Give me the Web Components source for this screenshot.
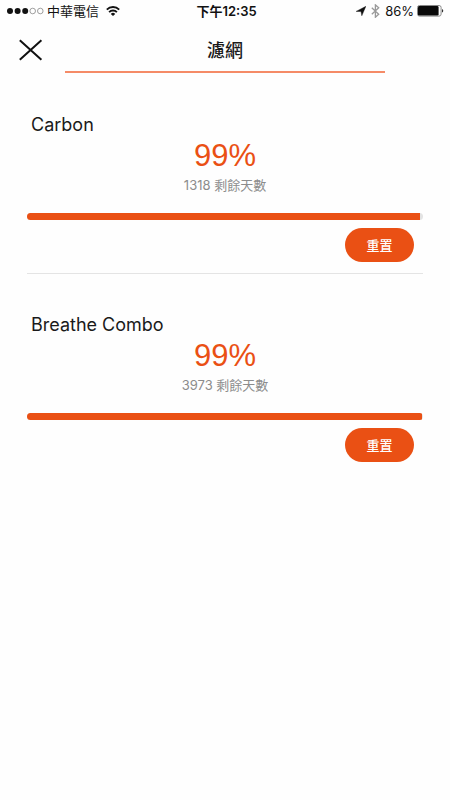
<!DOCTYPE html>
<html lang="zh-Hant">
<head>
<meta charset="utf-8">
<meta name="viewport" content="width=device-width, initial-scale=1">
<title>濾網</title>
<style>
  body {
    margin: 0;
    background: #fefefe;
    color: #1a1a1a;
    font-family: Inter, "Noto Sans CJK TC", sans-serif;
    --accent: #ea5014;
  }
</style>
</head>
<body>
<filter-page></filter-page>
<script>
const define = (name, html, setup) => {
  const template = document.createElement('template');
  template.innerHTML = html;
  customElements.define(name, class extends HTMLElement {
    constructor() {
      super();
      this.attachShadow({ mode: 'open' }).append(template.content.cloneNode(true));
    }
    connectedCallback() {
      if (setup) setup(this, this.shadowRoot);
    }
  });
};

define('status-bar', `
  <style>
    :host { display: grid; grid-template-columns: 1fr auto 1fr; align-items: center;
            height: 22px; padding: 0 6px 0 7px; font-size: 13px; line-height: 20px; color: #111; }
    div { display: flex; align-items: center; }
    .left { gap: 3px; }
    .right { justify-content: flex-end; }
    .wifi { margin-left: 4px; }
    .arrow { margin-right: 5px; }
    .bt { margin-right: 5px; }
    .battery { margin-left: 3px; }
    time { padding-left: 2px; font-weight: 600; }
    svg { display: block; flex: none; }
  </style>
  <div class="left">
    <svg width="37" height="8" viewBox="0 0 37 8" aria-hidden="true">
      <g fill="#111"><circle cx="3" cy="4" r="3"/><circle cx="10.6" cy="4" r="3"/><circle cx="18.2" cy="4" r="3"/></g>
      <g fill="none" stroke="#777" stroke-width=".7"><circle cx="25.7" cy="4" r="2.8"/><circle cx="33.3" cy="4" r="2.8"/></g>
    </svg>
    <span>中華電信</span>
    <svg class="wifi" width="14" height="10" viewBox="0 0 14 10" aria-hidden="true">
      <g fill="none" stroke="#111" stroke-width="1.9"><path d="M.8 3.6a8.8 8.8 0 0 1 12.4 0"/><path d="M3.1 6.1a5.5 5.5 0 0 1 7.8 0"/></g>
      <path d="M7 10 4.8 7.9a3.1 3.1 0 0 1 4.4 0z" fill="#111"/>
    </svg>
  </div>
  <time datetime="12:35">下午12:35</time>
  <div class="right">
    <svg class="arrow" width="10" height="10" viewBox="0 0 10 10" aria-hidden="true"><path d="M9.9.3 5.8 9.8 5 5.6.1 5.4z" fill="#111" stroke="#111" stroke-width=".4"/></svg>
    <svg class="bt" width="9" height="14" viewBox="0 0 9 14" aria-hidden="true"><path d="m.8 3.7 6.9 6.5-3.3 3V.9l3.3 2.9-6.9 6.5" fill="none" stroke="#999" stroke-width="1.3"/></svg>
    <span>86%</span>
    <svg class="battery" width="27" height="12" viewBox="0 0 27 12" aria-hidden="true">
      <rect x=".5" y=".5" width="23.6" height="10.6" rx="2" fill="none" stroke="#888"/>
      <rect x="1" y="1" width="20.6" height="9.6" rx="1.4" fill="#0a0a0a"/>
      <path d="M25 4c1.7.5 1.7 3.1 0 3.6z" fill="#333"/>
    </svg>
  </div>
`);

define('page-header', `
  <style>
    :host { display: block; }
    .row { display: grid; grid-template-columns: 1fr auto 1fr; align-items: center; height: 49px; padding: 0 16px; }
    h1 { margin: 0; padding-top: 8px; font-size: 18px; line-height: 24px; font-weight: 500; }
    button { justify-self: start; display: block; margin-top: 6px; padding: 3px; border: 0; background: none; color: #111; }
    svg { display: block; }
    .rule { height: 2px; margin: 0 65px; background: #f58b67; }
  </style>
  <div class="row">
    <button type="button" aria-label="關閉">
      <svg width="24" height="22" viewBox="0 0 24 22" aria-hidden="true"><path d="M.8 1.2 22.4 20.8M22.4 1.2.8 20.8" fill="none" stroke="currentColor" stroke-width="2"/></svg>
    </button>
    <h1><slot></slot></h1>
  </div>
  <div class="rule"></div>
`);

define('reset-button', `
  <style>
    :host { display: block; }
    button { display: block; min-width: 69px; height: 34px; padding: 0 20px; border: 0; border-radius: 17px;
             background: var(--accent); color: #fff; font: inherit; font-size: 13px; font-weight: 500; line-height: 20px; }
  </style>
  <button type="button"><slot></slot></button>
`);

define('filter-card', `
  <style>
    :host { display: flex; flex-direction: column; margin: 0 27px; padding: 40px 0 11px; border-bottom: 1px solid #e4e4e4; }
    :host(:last-of-type) { border-bottom: 0; }
    h2 { margin: 0 4px; font-size: 18px; line-height: 22px; font-weight: 400; }
    p { margin: 0; text-align: center; }
    .percent { font-family: "Liberation Sans", Arial, sans-serif; font-size: 31px; line-height: 40px; color: var(--accent); }
    .days { font-size: 13px; line-height: 18px; color: #8c8c8c; }
    progress { display: block; appearance: none; -webkit-appearance: none; width: 100%; height: 7px; margin: 19px 0 8px;
               border: 0; border-radius: 4px; overflow: hidden; background: #e3e3e3; }
    progress::-webkit-progress-bar { background: #e3e3e3; }
    progress::-webkit-progress-value { background: var(--accent); }
    reset-button { align-self: flex-end; margin-right: 9px; }
  </style>
  <h2 id="name"><slot></slot></h2>
  <p class="percent"></p>
  <p class="days"></p>
  <progress max="1000" aria-labelledby="name"></progress>
  <reset-button>重置</reset-button>
`, (host, root) => {
  root.querySelector('.percent').textContent = host.getAttribute('percent') + '%';
  root.querySelector('.days').textContent = host.getAttribute('days') + ' 剩餘天數';
  root.querySelector('progress').value = Number(host.getAttribute('life'));
});

define('filter-page', `
  <style>
    :host { display: block; min-height: 100vh; }
    main { padding-top: 1px; }
  </style>
  <status-bar></status-bar>
  <page-header>濾網</page-header>
  <main>
    <filter-card percent="99" days="1318" life="993">Carbon</filter-card>
    <filter-card percent="99" days="3973" life="998">Breathe Combo</filter-card>
  </main>
`);
</script>
</body>
</html>
